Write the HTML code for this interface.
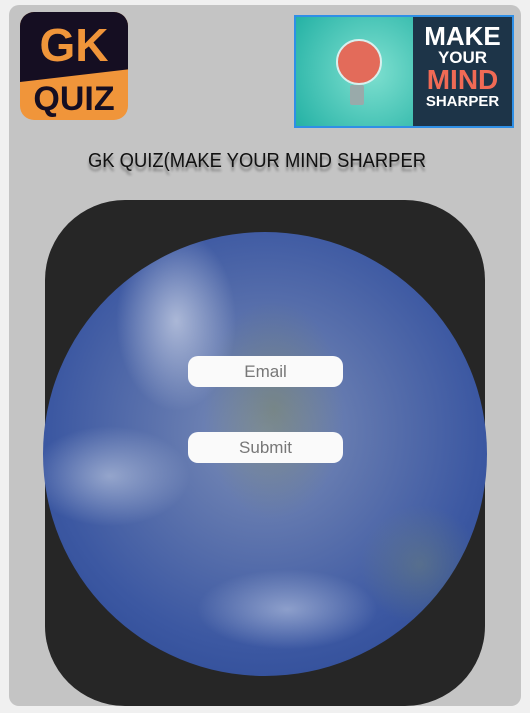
<!DOCTYPE html>
<html><head><meta charset="utf-8"><style>
body{margin:0;width:530px;height:713px;background:#f0f0f0;position:relative;overflow:hidden;font-family:"Liberation Sans",sans-serif}
.card{position:absolute;left:9px;top:5px;width:512px;height:701px;background:#c4c4c4;border-radius:10px;overflow:hidden}
.logo{position:absolute;left:20px;top:12px;width:108px;height:108px;border-radius:14px;overflow:hidden;background:#f0953a}
.logo .top{position:absolute;left:0;top:0;width:108px;height:70px;background:#150e22;clip-path:polygon(0 0,100% 0,100% 82%,0 100%)}
.logo .gk{position:absolute;left:0;width:108px;text-align:center;top:6px;font:bold 46px "Liberation Sans",sans-serif;color:#f0953a}
.logo .q{position:absolute;left:0;width:108px;text-align:center;top:68px;font:bold 34px "Liberation Sans",sans-serif;color:#150e22}
.ban{position:absolute;left:294px;top:15px;width:216px;height:109px;border:2px solid #2f8fe6;background:radial-gradient(circle at 35% 50%,#7fe0d0,#27b3a6 60%,#1fa095)}
.ban .r{position:absolute;right:0;top:0;width:99px;height:109px;background:#1d3448;text-align:center;font-weight:bold;line-height:1}
.title{position:absolute;left:0;width:514px;top:150px;text-align:center;font-size:20px;color:#111;text-shadow:0 4px 3px rgba(0,0,0,.35);transform:scaleX(0.92)}
.blk{position:absolute;left:45px;top:200px;width:440px;height:506px;background:#262626;border-radius:80px}
.earth{position:absolute;left:43px;top:232px;width:444px;height:444px;border-radius:50%;background:
radial-gradient(ellipse 60px 90px at 30% 20%,rgba(230,235,245,.6),transparent),
radial-gradient(ellipse 80px 50px at 15% 55%,rgba(220,228,240,.5),transparent),
radial-gradient(ellipse 90px 40px at 55% 85%,rgba(210,220,240,.5),transparent),
radial-gradient(ellipse 70px 110px at 52% 40%,rgba(120,130,80,.45),transparent),
radial-gradient(ellipse 60px 60px at 85% 75%,rgba(110,130,120,.5),transparent),
radial-gradient(circle at 50% 45%,#7d8fb8 0,#5a71ac 35%,#3c58a2 65%,#2d4a95 88%,#7388c8 97%,#30406a 100%)}
.in{position:absolute;left:188px;width:155px;height:31px;background:#fafafa;border-radius:10px;text-align:center;line-height:31px;font-size:17px;color:#777}
</style></head><body>
<div class="card"></div>
<div class="blk"></div>
<div class="earth"></div>
<div class="logo"><div class="top"></div><div class="gk">GK</div><div class="q">QUIZ</div></div>
<div class="ban">
<div style="position:absolute;left:40px;top:22px;width:42px;height:42px;border-radius:50%;background:#e36b5a;border:2px solid #d8f0ee"></div>
<div style="position:absolute;left:54px;top:68px;width:14px;height:20px;background:#9aa;border-radius:2px"></div>
<div class="r"><div style="font-size:26px;color:#fff;margin-top:6px">MAKE</div><div style="font-size:17px;color:#fff">YOUR</div><div style="font-size:28px;color:#f06a55">MIND</div><div style="font-size:15px;color:#fff">SHARPER</div></div></div>
<div class="title">GK QUIZ(MAKE YOUR MIND SHARPER</div>
<div class="in" style="top:356px">Email</div>
<div class="in" style="top:432px">Submit</div>
</body></html>
